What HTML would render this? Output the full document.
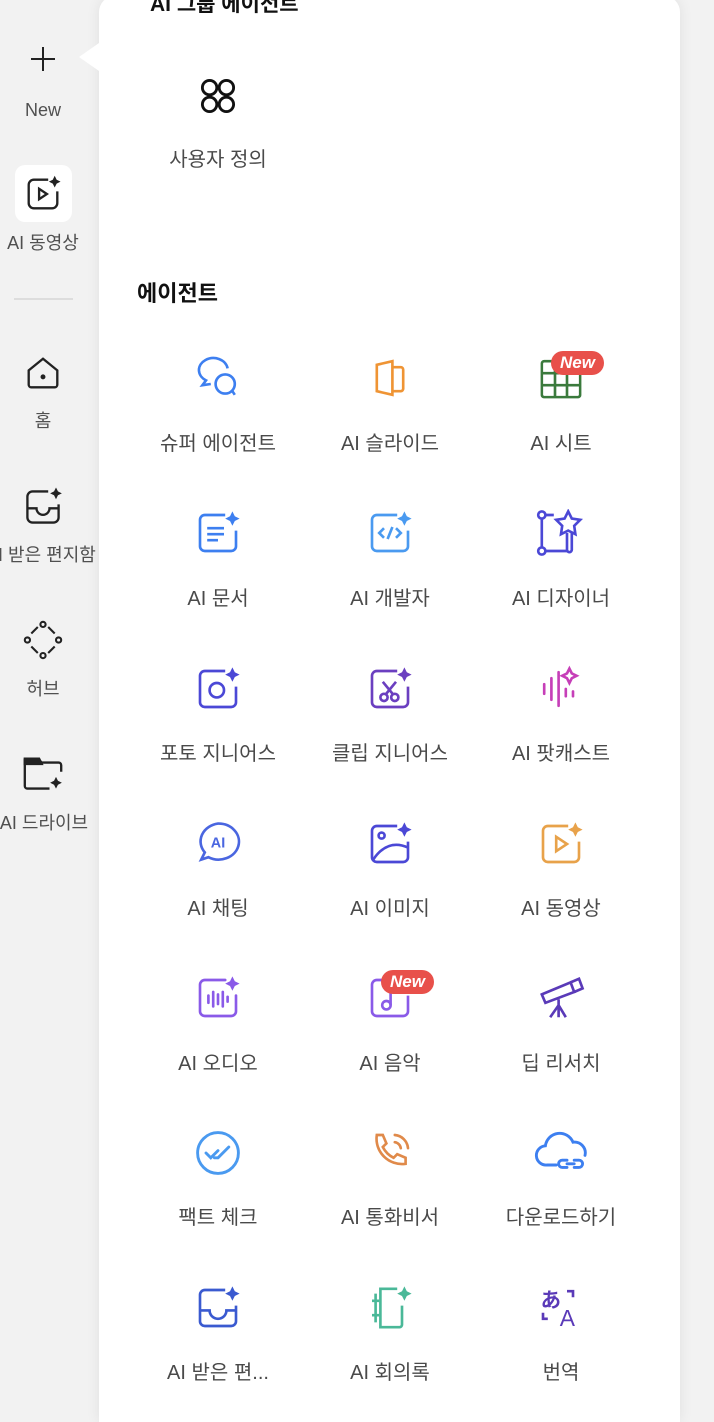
<!DOCTYPE html>
<html style="overflow:hidden;height:1422px"><head><meta charset="utf-8"><style>
*{margin:0;padding:0;box-sizing:border-box}
body{width:714px;height:1422px;overflow:hidden;background:#f2f2f2;font-family:"Liberation Sans","Noto Sans CJK KR",sans-serif;position:relative}
.side{position:absolute;left:0;top:0;width:99px;height:1422px;background:#f2f2f2}
.si{position:absolute;left:0;width:86px;text-align:center;font-size:18px;color:#505050;white-space:nowrap}
.sic{position:absolute;left:43px;transform:translate(-50%,-50%) scale(1.3)}
.panel{position:absolute;left:99px;top:-4px;width:581px;height:1426px;background:#fff;border-radius:16px 16px 0 0;box-shadow:0 0 14px rgba(0,0,0,.08)}
.tri{position:absolute;left:79px;top:43px;width:0;height:0;border-top:14px solid transparent;border-bottom:14px solid transparent;border-right:20px solid #fff}
.it{position:absolute;width:170px;text-align:center;font-size:20px;color:#4a4a4a;white-space:nowrap}
.ic{position:absolute;transform:translate(-50%,-50%) scale(1.2)}
.new{position:absolute;background:#e8504a;color:#fff;font-style:italic;font-weight:bold;font-size:17px;border-radius:12px;padding:1px 9px;line-height:22px}
h2{position:absolute;left:137px;top:276px;font-size:22px;font-weight:bold;color:#111}
</style></head><body>
<div class="side">
 <svg class="sic" style="top:59px;transform:translate(-50%,-50%)" width="28" height="28" viewBox="0 0 28 28"><path d="M14 2v24M2 14h24" stroke="#222" stroke-width="2"/></svg>
 <div class="si" style="top:100px">New</div>
 <div style="position:absolute;left:15px;top:165px;width:57px;height:57px;background:#fff;border-radius:10px"></div>
 <svg class="sic" style="top:194px" width="32" height="32" viewBox="0 0 32 32" fill="none" stroke="#222" stroke-width="1.8"><path d="M20 5H9a4 4 0 0 0-4 4v14a4 4 0 0 0 4 4h14a4 4 0 0 0 4-4v-9"/><path d="M13 12v8l6-4z"/><path d="M25 2l1.5 3 3 1.5-3 1.5-1.5 3-1.5-3-3-1.5 3-1.5z" fill="#222" stroke="none"/></svg>
 <div class="si" style="top:229px">AI 동영상</div>
 <div style="position:absolute;left:14px;top:298px;width:59px;height:2px;background:#ddd"></div>
 <svg class="sic" style="top:373px" width="32" height="32" viewBox="0 0 32 32" fill="none" stroke="#222" stroke-width="1.8"><path d="M5 14L16 5l11 9v11a2 2 0 0 1-2 2H7a2 2 0 0 1-2-2z"/><circle cx="16" cy="19" r="1" fill="#222"/></svg>
 <div class="si" style="top:407px">홈</div>
 <svg class="sic" style="top:507px" width="34" height="34" viewBox="0 0 34 34" fill="none" stroke="#222" stroke-width="1.8"><path d="M21 5H9a4 4 0 0 0-4 4v16a4 4 0 0 0 4 4h16a4 4 0 0 0 4-4v-10"/><path d="M5 18h7a5 5 0 0 0 10 0h7"/><path d="M27 2l1.5 3 3 1.5-3 1.5-1.5 3-1.5-3-3-1.5 3-1.5z" fill="#222" stroke="none"/></svg>
 <div class="si" style="top:541px;left:-14px;width:auto">AI 받은 편지함</div>
 <svg class="sic" style="top:640px" width="34" height="34" viewBox="0 0 34 34" fill="none" stroke="#222" stroke-width="1.6"><path d="M8 12l5-5M21 7l5 5M26 22l-5 5M13 27l-5-5"/><circle cx="17" cy="5" r="2"/><circle cx="17" cy="29" r="2"/><circle cx="5" cy="17" r="2"/><circle cx="29" cy="17" r="2"/></svg>
 <div class="si" style="top:675px">허브</div>
 <svg class="sic" style="top:773px" width="34" height="30" viewBox="0 0 34 30" fill="none" stroke="#222" stroke-width="1.8"><path d="M3 4h10l3 3h13a2 2 0 0 1 2 2v5M22 27H5a2 2 0 0 1-2-2V4"/><path d="M3 4h11l2 4H3z" fill="#222"/><path d="M27 18l1.5 3 3 1.5-3 1.5-1.5 3-1.5-3-3-1.5 3-1.5z" fill="#222" stroke="none"/></svg>
 <div class="si" style="top:809px;left:-6px;width:100px">AI 드라이브</div>
</div>
<div class="panel"></div>
<div class="tri"></div>
<div style="position:absolute;left:150px;top:-12px;font-size:21px;font-weight:bold;color:#111">AI 그룹 에이전트</div>
<svg class="ic" style="left:218px;top:96px" width="34" height="34" viewBox="0 0 34 34" fill="none" stroke="#111" stroke-width="2.4"><circle cx="10" cy="10" r="6"/><circle cx="24" cy="10" r="6"/><circle cx="10" cy="24" r="6"/><circle cx="24" cy="24" r="6"/></svg>
<div class="it" style="left:133px;top:143px">사용자 정의</div>
<h2>에이전트</h2>

<svg class="ic" style="left:218px;top:378px" width="36" height="36" viewBox="0 0 36 36" fill="none" stroke="#3d7ff0" stroke-width="2.2"><path d="M26 10a12 10 0 1 0-18 10l-3 4 7-1"/><circle cx="24" cy="23" r="8"/><path d="M30 29l2 3"/></svg>
<div class="it" style="left:133px;top:427px">슈퍼 에이전트</div>
<svg class="ic" style="left:390px;top:378px" width="32" height="34" viewBox="0 0 32 34" fill="none" stroke="#ef9434" stroke-width="2.2"><path d="M5 6l13-3v28L5 28z"/><path d="M18 8h7a2 2 0 0 1 2 2v16a2 2 0 0 1-2 2h-7"/></svg>
<div class="it" style="left:305px;top:427px">AI 슬라이드</div>
<svg class="ic" style="left:561px;top:378px" width="34" height="34" viewBox="0 0 34 34" fill="none" stroke="#3a7a3c" stroke-width="2.2"><rect x="1" y="3" width="32" height="30" rx="2"/><path d="M1 13h32M1 23h32M12 3v30M22 3v30"/></svg>
<div class="new" style="left:551px;top:351px">New</div>
<div class="it" style="left:476px;top:427px">AI 시트</div>

<svg class="ic" style="left:218px;top:533px" width="40" height="40" viewBox="0 0 40 40" fill="none" stroke="#3d7ff0" stroke-width="2.2"><path d="M26 5H9a4 4 0 0 0-4 4v22a4 4 0 0 0 4 4h22a4 4 0 0 0 4-4V18"/><path d="M11 16h14M11 21h14M11 26h9"/><path d="M32 2l2 4 4 2-4 2-2 4-2-4-4-2 4-2z" fill="#3d7ff0" stroke="none"/></svg>
<div class="it" style="left:133px;top:582px">AI 문서</div>
<svg class="ic" style="left:390px;top:533px" width="40" height="40" viewBox="0 0 40 40" fill="none" stroke="#4a9af0" stroke-width="2.2"><path d="M26 5H9a4 4 0 0 0-4 4v22a4 4 0 0 0 4 4h22a4 4 0 0 0 4-4V18"/><path d="M15 16l-4 4 4 4M25 16l4 4-4 4M22 15l-4 10"/><path d="M32 2l2 4 4 2-4 2-2 4-2-4-4-2 4-2z" fill="#4a9af0" stroke="none"/></svg>
<div class="it" style="left:305px;top:582px">AI 개발자</div>
<svg class="ic" style="left:561px;top:533px" width="42" height="40" viewBox="0 0 42 40" fill="none" stroke="#4b48d6" stroke-width="2.2"><circle cx="5" cy="5" r="3"/><circle cx="5" cy="35" r="3"/><path d="M5 8v24M8 35h18M8 5h7"/><path d="M27 2l3 6 7 1-5 5 1 7-6-3-6 3 1-7-5-5 7-1z"/><path d="M26 20v14a2 2 0 0 0 4 0V20"/></svg>
<div class="it" style="left:476px;top:582px">AI 디자이너</div>

<svg class="ic" style="left:218px;top:689px" width="40" height="40" viewBox="0 0 40 40" fill="none" stroke="#4b48d6" stroke-width="2.2"><path d="M26 5H9a4 4 0 0 0-4 4v22a4 4 0 0 0 4 4h22a4 4 0 0 0 4-4V18"/><circle cx="19" cy="21" r="6"/><path d="M32 2l2 4 4 2-4 2-2 4-2-4-4-2 4-2z" fill="#4b48d6" stroke="none"/></svg>
<div class="it" style="left:133px;top:737px">포토 지니어스</div>
<svg class="ic" style="left:390px;top:689px" width="40" height="40" viewBox="0 0 40 40" fill="none" stroke="#6b3fc0" stroke-width="2.2"><path d="M26 5H9a4 4 0 0 0-4 4v22a4 4 0 0 0 4 4h22a4 4 0 0 0 4-4V18"/><circle cx="15" cy="27" r="3"/><circle cx="24" cy="27" r="3"/><path d="M14 14l9 11M25 14l-9 11"/><path d="M32 2l2 4 4 2-4 2-2 4-2-4-4-2 4-2z" fill="#6b3fc0" stroke="none"/></svg>
<div class="it" style="left:305px;top:737px">클립 지니어스</div>
<svg class="ic" style="left:561px;top:689px" width="40" height="40" viewBox="0 0 40 40" fill="none" stroke="#c63fb8" stroke-width="2.2" stroke-linecap="round"><path d="M6 16v8M12 11v18M18 6v28M24 20v6M30 22v4"/><path d="M27 3l2 4 4 2-4 2-2 4-2-4-4-2 4-2z"/></svg>
<div class="it" style="left:476px;top:737px">AI 팟캐스트</div>

<svg class="ic" style="left:218px;top:844px" width="40" height="40" viewBox="0 0 40 40" fill="none" stroke="#4a66e0" stroke-width="2.2"><path d="M20 3a17 15 0 1 1-8 28l-6 2 3-6A17 15 0 0 1 20 3z"/><text x="20" y="23" font-size="12" font-weight="bold" fill="#4a66e0" stroke="none" text-anchor="middle" font-family="Liberation Sans">AI</text></svg>
<div class="it" style="left:133px;top:892px">AI 채팅</div>
<svg class="ic" style="left:390px;top:844px" width="40" height="40" viewBox="0 0 40 40" fill="none" stroke="#4b48d6" stroke-width="2.2"><path d="M26 5H9a4 4 0 0 0-4 4v22a4 4 0 0 0 4 4h22a4 4 0 0 0 4-4V18"/><circle cx="13" cy="13" r="2.5"/><path d="M6 33c8-12 18-15 29-10"/><path d="M32 2l2 4 4 2-4 2-2 4-2-4-4-2 4-2z" fill="#4b48d6" stroke="none"/></svg>
<div class="it" style="left:305px;top:892px">AI 이미지</div>
<svg class="ic" style="left:561px;top:844px" width="40" height="40" viewBox="0 0 40 40" fill="none" stroke="#e8a24a" stroke-width="2.2"><path d="M26 5H9a4 4 0 0 0-4 4v22a4 4 0 0 0 4 4h22a4 4 0 0 0 4-4V18"/><path d="M16 14v12l9-6z"/><path d="M32 2l2 4 4 2-4 2-2 4-2-4-4-2 4-2z" fill="#e8a24a" stroke="none"/></svg>
<div class="it" style="left:476px;top:892px">AI 동영상</div>

<svg class="ic" style="left:218px;top:998px" width="40" height="40" viewBox="0 0 40 40" fill="none" stroke="#8a5ae8" stroke-width="2.2" stroke-linecap="round"><path d="M26 5H9a4 4 0 0 0-4 4v22a4 4 0 0 0 4 4h22a4 4 0 0 0 4-4V18"/><path d="M12 18v6M16 15v12M20 17v8M24 15v12M28 19v4"/><path d="M32 2l2 4 4 2-4 2-2 4-2-4-4-2 4-2z" fill="#8a5ae8" stroke="none"/></svg>
<div class="it" style="left:133px;top:1047px">AI 오디오</div>
<svg class="ic" style="left:390px;top:998px" width="40" height="40" viewBox="0 0 40 40" fill="none" stroke="#8a5ae8" stroke-width="2.2"><path d="M26 5H9a4 4 0 0 0-4 4v22a4 4 0 0 0 4 4h22a4 4 0 0 0 4-4V18"/><circle cx="17" cy="26" r="3.5"/><path d="M20.5 26V14"/></svg>
<div class="new" style="left:381px;top:970px">New</div>
<div class="it" style="left:305px;top:1047px">AI 음악</div>
<svg class="ic" style="left:561px;top:998px" width="40" height="40" viewBox="0 0 40 40" fill="none" stroke="#5a3ab8" stroke-width="2.2"><path d="M4 17l24-10 3 8-24 9z"/><path d="M28 7l7-3 3 8-7 3"/><path d="M18 21v5l-7 10M18 26l6 10M18 26v10"/></svg>
<div class="it" style="left:476px;top:1047px">딥 리서치</div>

<svg class="ic" style="left:218px;top:1153px" width="40" height="40" viewBox="0 0 40 40" fill="none" stroke="#4a9af0" stroke-width="2.4" stroke-linecap="round"><circle cx="20" cy="20" r="17"/><path d="M10 20l4 4 6-6M20 24l9-9M17 24l3 0"/></svg>
<div class="it" style="left:133px;top:1201px">팩트 체크</div>
<svg class="ic" style="left:390px;top:1153px" width="40" height="40" viewBox="0 0 40 40" fill="none" stroke="#e08a4a" stroke-width="2.2" stroke-linecap="round"><path d="M9 5l5 0 3 7-3 3c2 4 5 7 9 9l3-3 7 3v5c-14 2-26-10-24-24z"/><path d="M24 5a12 12 0 0 1 11 11M24 11a6 6 0 0 1 5 5"/></svg>
<div class="it" style="left:305px;top:1201px">AI 통화비서</div>
<svg class="ic" style="left:561px;top:1153px" width="44" height="36" viewBox="0 0 44 36" fill="none" stroke="#3d7ff0" stroke-width="2.4" stroke-linecap="round"><path d="M18 28H10a8 8 0 0 1-1-16 12 12 0 0 1 23-3 9 9 0 0 1 10 11"/><path d="M27 24h-4a3 3 0 0 0 0 6h4M33 24h4a3 3 0 0 1 0 6h-4M27 27h6"/></svg>
<div class="it" style="left:476px;top:1201px">다운로드하기</div>

<svg class="ic" style="left:218px;top:1308px" width="40" height="40" viewBox="0 0 40 40" fill="none" stroke="#3a5ad0" stroke-width="2.2"><path d="M26 5H9a4 4 0 0 0-4 4v22a4 4 0 0 0 4 4h22a4 4 0 0 0 4-4V18"/><path d="M5 22h8a7 7 0 0 0 14 0h8"/><path d="M32 2l2 4 4 2-4 2-2 4-2-4-4-2 4-2z" fill="#3a5ad0" stroke="none"/></svg>
<div class="it" style="left:133px;top:1356px">AI 받은 편...</div>
<svg class="ic" style="left:390px;top:1308px" width="40" height="40" viewBox="0 0 40 40" fill="none" stroke="#4ab898" stroke-width="2.2"><path d="M26 4H12v32h16a2 2 0 0 0 2-2V18"/><path d="M8 8v24M5 14h6M5 26h6"/><path d="M32 2l2 4 4 2-4 2-2 4-2-4-4-2 4-2z" fill="#4ab898" stroke="none"/></svg>
<div class="it" style="left:305px;top:1356px">AI 회의록</div>
<svg class="ic" style="left:561px;top:1308px" width="36" height="36" viewBox="0 0 36 36" fill="none" stroke="#5a3ab8" stroke-width="2.2"><text x="1" y="17" font-size="17" font-weight="bold" fill="#5a3ab8" stroke="none" font-family="Noto Sans CJK JP">あ</text><text x="17" y="33" font-size="19" fill="#5a3ab8" stroke="none" font-family="Liberation Sans">A</text><path d="M23 4h5v5M3 22v5h4"/></svg>
<div class="it" style="left:476px;top:1356px">번역</div>
</body></html>
